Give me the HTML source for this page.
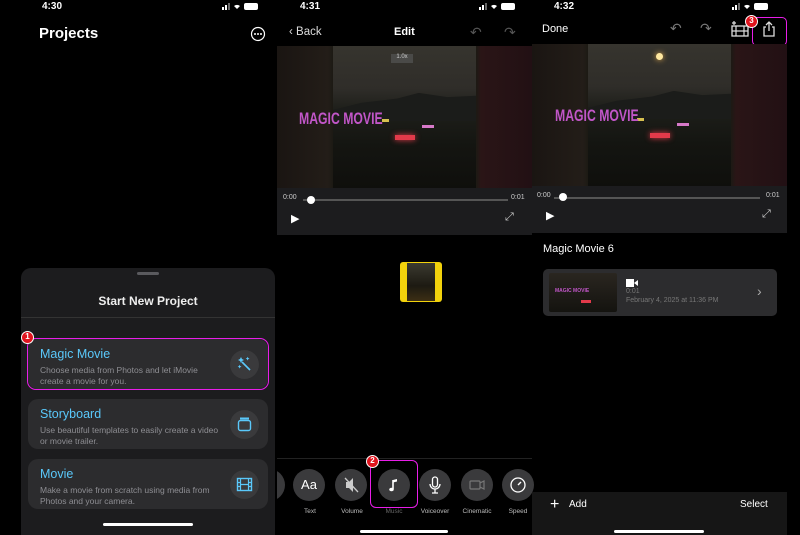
<!DOCTYPE html>
<html><head><meta charset="utf-8"><style>
*{margin:0;padding:0;box-sizing:border-box}
body{width:800px;height:535px;background:#000;position:relative;overflow:hidden;font-family:"Liberation Sans",sans-serif;color:#fff}
.a{position:absolute}
.t{position:absolute;white-space:nowrap}
.vid{position:absolute;background:linear-gradient(90deg,#1a1512,#231d18 20%,#1c1a14 22%,#1c1a14 78%,#2a1516 80%,#221014)}
.scene{position:absolute;top:0;bottom:0;background:linear-gradient(180deg,#36342e 0%,#2f2d29 30%,#1e1f1a 45%,#141511 70%,#0f0f0c 100%)}
.mtn{position:absolute;left:0;right:0;top:33%;height:20%;background:#1b1c1a;clip-path:polygon(0 60%,20% 35%,45% 20%,60% 0,80% 15%,100% 10%,100% 100%,0 100%)}
.mm{position:absolute;color:#c156c8;font-family:"Liberation Sans Narrow","Liberation Sans",sans-serif;font-weight:bold;font-size:17px;transform:scaleX(.72);transform-origin:left}
.ctrl{position:absolute;background:#1c1c1e}
.track{position:absolute;height:2px;background:#555}
.knob{position:absolute;width:8px;height:8px;border-radius:50%;background:#fff}
.card{position:absolute;background:#2c2c2e;border-radius:10px}
.card .h{position:absolute;left:12px;top:8px;color:#5ac8fa;font-size:12.5px}
.card .d{position:absolute;left:12px;top:26px;color:#8e8e93;font-size:8.5px;line-height:10.5px}
.ic{position:absolute;right:9px;top:11px;width:29px;height:29px;border-radius:50%;background:#3a3a3c}
.tool{position:absolute;top:469px;width:32px;height:32px;border-radius:50%;background:#3a3a3c}
.lbl{position:absolute;top:508px;font-size:6.5px;color:#bbb;width:50px;text-align:center}
.badge{position:absolute;width:13px;height:13px;border-radius:50%;background:#e0141e;border:1.5px solid #fff;color:#fff;font-size:8px;font-weight:bold;text-align:center;line-height:10px}
.home{position:absolute;height:3px;background:#fff;border-radius:2px}
</style></head><body>

<!-- PANEL 1 -->
<div class="t" style="left:42px;top:1px;font-size:10px;font-weight:bold">4:30</div>
<svg class="a" style="left:220px;top:2px" width="45" height="9"><rect x="2" y="5" width="2" height="3" fill="#fff"/><rect x="5" y="3" width="2" height="5" fill="#fff"/><rect x="8" y="1" width="2" height="7" fill="#666"/><path d="M17 7 L14 4 A5 5 0 0 1 20 4 Z" fill="#fff"/><rect x="24" y="1" width="14" height="7" rx="2" fill="#fff"/></svg>
<div class="t" style="left:39px;top:25px;font-size:15px;font-weight:bold">Projects</div>
<svg class="a" style="left:250px;top:26px" width="16" height="16"><circle cx="8" cy="8" r="6.5" fill="none" stroke="#fff" stroke-width="1.2"/><circle cx="5" cy="8" r="1" fill="#fff"/><circle cx="8" cy="8" r="1" fill="#fff"/><circle cx="11" cy="8" r="1" fill="#fff"/></svg>

<div class="a" style="left:21px;top:268px;width:254px;height:267px;background:#1c1c1e;border-radius:10px 10px 0 0"></div>
<div class="a" style="left:137px;top:272px;width:22px;height:3px;border-radius:2px;background:#5a5a5e"></div>
<div class="t" style="left:21px;width:254px;text-align:center;top:294px;font-size:12px;font-weight:bold;color:#eee">Start New Project</div>
<div class="a" style="left:21px;top:317px;width:254px;height:1px;background:#333"></div>

<div class="card" style="left:28px;top:339px;width:240px;height:50px"><div class="h">Magic Movie</div><div class="d">Choose media from Photos and let iMovie<br>create a movie for you.</div><div class="ic"><svg width="29" height="29"><path d="M12 12 L20 20" stroke="#5ac8fa" stroke-width="1.6"/><path d="M10 9 l1 -2 l1 2 l2 1 l-2 1 l-1 2 l-1 -2 l-2 -1z M17 8 l.6-1.3 .6 1.3 1.3.6-1.3.6-.6 1.3-.6-1.3-1.3-.6z M9 16 l.6-1.3 .6 1.3 1.3.6-1.3.6-.6 1.3-.6-1.3-1.3-.6z" fill="#5ac8fa"/></svg></div></div>
<div class="a" style="left:27px;top:338px;width:242px;height:52px;border:1.5px solid #e81ee8;border-radius:9px"></div>
<div class="badge" style="left:21px;top:331px">1</div>

<div class="card" style="left:28px;top:399px;width:240px;height:50px"><div class="h">Storyboard</div><div class="d">Use beautiful templates to easily create a video<br>or movie trailer.</div><div class="ic"><svg width="29" height="29"><rect x="8.5" y="10.5" width="12" height="10" rx="2" fill="none" stroke="#5ac8fa" stroke-width="1.4"/><rect x="10" y="7.5" width="9" height="2" fill="#5ac8fa"/></svg></div></div>
<div class="card" style="left:28px;top:459px;width:240px;height:50px"><div class="h">Movie</div><div class="d">Make a movie from scratch using media from<br>Photos and your camera.</div><div class="ic"><svg width="29" height="29"><rect x="7.5" y="8.5" width="14" height="12" fill="none" stroke="#5ac8fa" stroke-width="1.4"/><path d="M10.5 8.5v12M18.5 8.5v12M7.5 12.5h3M7.5 16.5h3M18.5 12.5h3M18.5 16.5h3M10.5 14.5h8" stroke="#5ac8fa" stroke-width="1.2"/></svg></div></div>
<div class="home" style="left:103px;top:523px;width:90px"></div>

<!-- PANEL 2 -->
<div class="a" style="left:277px;top:0;width:255px;height:535px;overflow:hidden">
<div class="tool" style="left:-24px"></div>
</div>
<div class="t" style="left:300px;top:1px;font-size:10px;font-weight:bold">4:31</div>
<svg class="a" style="left:477px;top:2px" width="45" height="9"><rect x="2" y="5" width="2" height="3" fill="#fff"/><rect x="5" y="3" width="2" height="5" fill="#fff"/><rect x="8" y="1" width="2" height="7" fill="#666"/><path d="M17 7 L14 4 A5 5 0 0 1 20 4 Z" fill="#fff"/><rect x="24" y="1" width="14" height="7" rx="2" fill="#fff"/></svg>
<div class="t" style="left:289px;top:26px;font-size:11.5px;color:#ddd">&#8249; Back</div>
<div class="t" style="left:394px;top:26px;font-size:11px;font-weight:bold">Edit</div>
<div class="t" style="left:470px;top:24px;font-size:14px;color:#555">&#8630;</div>
<div class="t" style="left:504px;top:24px;font-size:14px;color:#555">&#8631;</div>
<div class="vid" style="left:277px;top:46px;width:255px;height:142px"><div class="scene" style="left:56px;width:143px"><div class="mtn"></div><div class="a" style="left:58px;top:8px;width:22px;height:9px;background:#4a4a48;font-size:6px;color:#ccc;text-align:center">1.0x</div><div class="a" style="left:62px;top:89px;width:20px;height:5px;background:#e23a4a;box-shadow:0 0 6px #e23a4a"></div><div class="a" style="left:49px;top:73px;width:7px;height:3px;background:#d6c050"></div><div class="a" style="left:89px;top:79px;width:12px;height:3px;background:#d679c8"></div></div><div class="mm" style="left:22px;top:63px">MAGIC MOVIE</div></div>
<div class="ctrl" style="left:277px;top:188px;width:255px;height:47px"><div class="t" style="left:6px;top:6px;font-size:7px;color:#ccc">0:00</div><div class="track" style="left:26px;top:11px;width:205px"></div><div class="knob" style="left:30px;top:8px"></div><div class="t" style="left:234px;top:6px;font-size:7px;color:#ccc">0:01</div><div class="t" style="left:14px;top:24px;font-size:11px">&#9654;</div><div class="t" style="left:228px;top:23px;font-size:11px;color:#ccc">&#10530;</div></div>
<div class="a" style="left:400px;top:262px;width:42px;height:40px;background:#f2d20c;border-radius:3px"></div>
<div class="a" style="left:407px;top:263px;width:28px;height:38px;background:linear-gradient(#3b3a30,#1d1a12 60%,#3c2e14)"></div>
<div class="a" style="left:277px;top:458px;width:255px;height:1px;background:#222"></div>
<div class="tool" style="left:293px"><div class="t" style="left:0;width:32px;top:8px;text-align:center;font-size:13px">Aa</div></div>
<div class="tool" style="left:335px"><svg width="32" height="32"><path d="M11 13h3l4-4v14l-4-4h-3z" fill="#ccc"/><path d="M10 9l13 14" stroke="#ccc" stroke-width="1.3"/></svg></div>
<div class="tool" style="left:378px"><svg width="32" height="32"><path d="M15 11v9" stroke="#fff" stroke-width="1.6"/><ellipse cx="13.5" cy="20.5" rx="2.3" ry="1.8" fill="#fff"/><path d="M15 11l4 -1v2.5l-4 1z" fill="#fff"/></svg></div>
<div class="tool" style="left:419px"><svg width="32" height="32"><rect x="13.5" y="8" width="5" height="10" rx="2.5" fill="none" stroke="#fff" stroke-width="1.3"/><path d="M11 15a5 5 0 0 0 10 0M16 20v4M13 24h6" stroke="#fff" stroke-width="1.3" fill="none"/></svg></div>
<div class="tool" style="left:461px"><svg width="32" height="32"><rect x="9" y="12" width="10" height="8" rx="1" fill="none" stroke="#777" stroke-width="1.2"/><path d="M19 14l4-2v8l-4-2" fill="none" stroke="#777" stroke-width="1.2"/></svg></div>
<div class="tool" style="left:502px"><svg width="32" height="32"><circle cx="16" cy="16" r="7" fill="none" stroke="#fff" stroke-width="1.3"/><path d="M16 16l3-3" stroke="#fff" stroke-width="1.4"/></svg></div>
<div class="a" style="left:370px;top:460px;width:48px;height:48px;border:1.5px solid #e81ee8;border-radius:6px"></div>
<div class="badge" style="left:366px;top:455px">2</div>
<div class="lbl" style="left:285px">Text</div>
<div class="lbl" style="left:327px">Volume</div>
<div class="lbl" style="left:369px;color:#666">Music</div>
<div class="lbl" style="left:410px">Voiceover</div>
<div class="lbl" style="left:452px">Cinematic</div>
<div class="lbl" style="left:493px">Speed</div>
<div class="home" style="left:360px;top:530px;width:88px"></div>

<!-- PANEL 3 -->
<div class="t" style="left:554px;top:1px;font-size:10px;font-weight:bold">4:32</div>
<svg class="a" style="left:730px;top:2px" width="45" height="9"><rect x="2" y="5" width="2" height="3" fill="#fff"/><rect x="5" y="3" width="2" height="5" fill="#fff"/><rect x="8" y="1" width="2" height="7" fill="#666"/><path d="M17 7 L14 4 A5 5 0 0 1 20 4 Z" fill="#fff"/><rect x="24" y="1" width="14" height="7" rx="2" fill="#fff"/></svg>
<div class="t" style="left:542px;top:23px;font-size:11px">Done</div>
<div class="t" style="left:670px;top:20px;font-size:14px;color:#777">&#8630;</div>
<div class="t" style="left:700px;top:20px;font-size:14px;color:#777">&#8631;</div>
<svg class="a" style="left:730px;top:20px" width="20" height="18"><rect x="2" y="6" width="16" height="10" fill="none" stroke="#ddd" stroke-width="1.3"/><path d="M6 6v10M14 6v10M2 11h16M4 1v4M2 3h4" stroke="#ddd" stroke-width="1.2"/></svg>
<svg class="a" style="left:761px;top:20px" width="16" height="18"><path d="M5 7H3v9h10V7h-2M8 2v9M5 5l3-3 3 3" fill="none" stroke="#ddd" stroke-width="1.3"/></svg>
<div class="a" style="left:752px;top:17px;width:35px;height:29px;border:1.5px solid #e81ee8;border-radius:5px"></div>
<div class="badge" style="left:745px;top:15px">3</div>
<div class="vid" style="left:532px;top:44px;width:255px;height:142px"><div class="scene" style="left:56px;width:143px"><div class="mtn"></div><div class="a" style="left:68px;top:9px;width:7px;height:7px;border-radius:50%;background:#ffe8a0;box-shadow:0 0 6px #e8b050"></div><div class="a" style="left:62px;top:89px;width:20px;height:5px;background:#e23a4a;box-shadow:0 0 6px #e23a4a"></div><div class="a" style="left:49px;top:74px;width:7px;height:3px;background:#d6c050"></div><div class="a" style="left:89px;top:79px;width:12px;height:3px;background:#d679c8"></div></div><div class="mm" style="left:23px;top:62px">MAGIC MOVIE</div></div>
<div class="ctrl" style="left:532px;top:186px;width:255px;height:47px"><div class="t" style="left:5px;top:6px;font-size:7px;color:#ccc">0:00</div><div class="track" style="left:22px;top:11px;width:206px"></div><div class="knob" style="left:27px;top:7px"></div><div class="t" style="left:234px;top:6px;font-size:7px;color:#ccc">0:01</div><div class="t" style="left:14px;top:23px;font-size:11px">&#9654;</div><div class="t" style="left:230px;top:22px;font-size:11px;color:#ccc">&#10530;</div></div>
<div class="t" style="left:543px;top:243px;font-size:11px">Magic Movie 6</div>
<div class="a" style="left:543px;top:269px;width:234px;height:47px;background:#2c2c2e;border-radius:5px"></div>
<div class="a" style="left:549px;top:273px;width:68px;height:39px;background:linear-gradient(#2a2620,#14130f);border-radius:2px"><div class="t" style="left:6px;top:15px;font-size:5px;color:#c156c8;font-weight:bold">MAGIC MOVIE</div><div class="a" style="left:32px;top:27px;width:10px;height:3px;background:#e23a4a"></div></div>
<svg class="a" style="left:626px;top:279px" width="12" height="8"><rect x="0" y="0" width="8" height="8" fill="#fff"/><path d="M8 4l4-3v6z" fill="#fff"/></svg>
<div class="t" style="left:626px;top:288px;font-size:7px;color:#777">0:01</div>
<div class="t" style="left:626px;top:297px;font-size:7px;color:#777">February 4, 2025 at 11:36 PM</div>
<div class="t" style="left:757px;top:283px;font-size:14px;color:#aaa">&#8250;</div>
<div class="a" style="left:532px;top:492px;width:255px;height:43px;background:#161616"></div>
<div class="t" style="left:550px;top:496px;font-size:16px;font-weight:lighter">+</div>
<div class="t" style="left:569px;top:499px;font-size:10px">Add</div>
<div class="t" style="left:740px;top:499px;font-size:10px">Select</div>
<div class="home" style="left:614px;top:530px;width:90px"></div>
</body></html>
